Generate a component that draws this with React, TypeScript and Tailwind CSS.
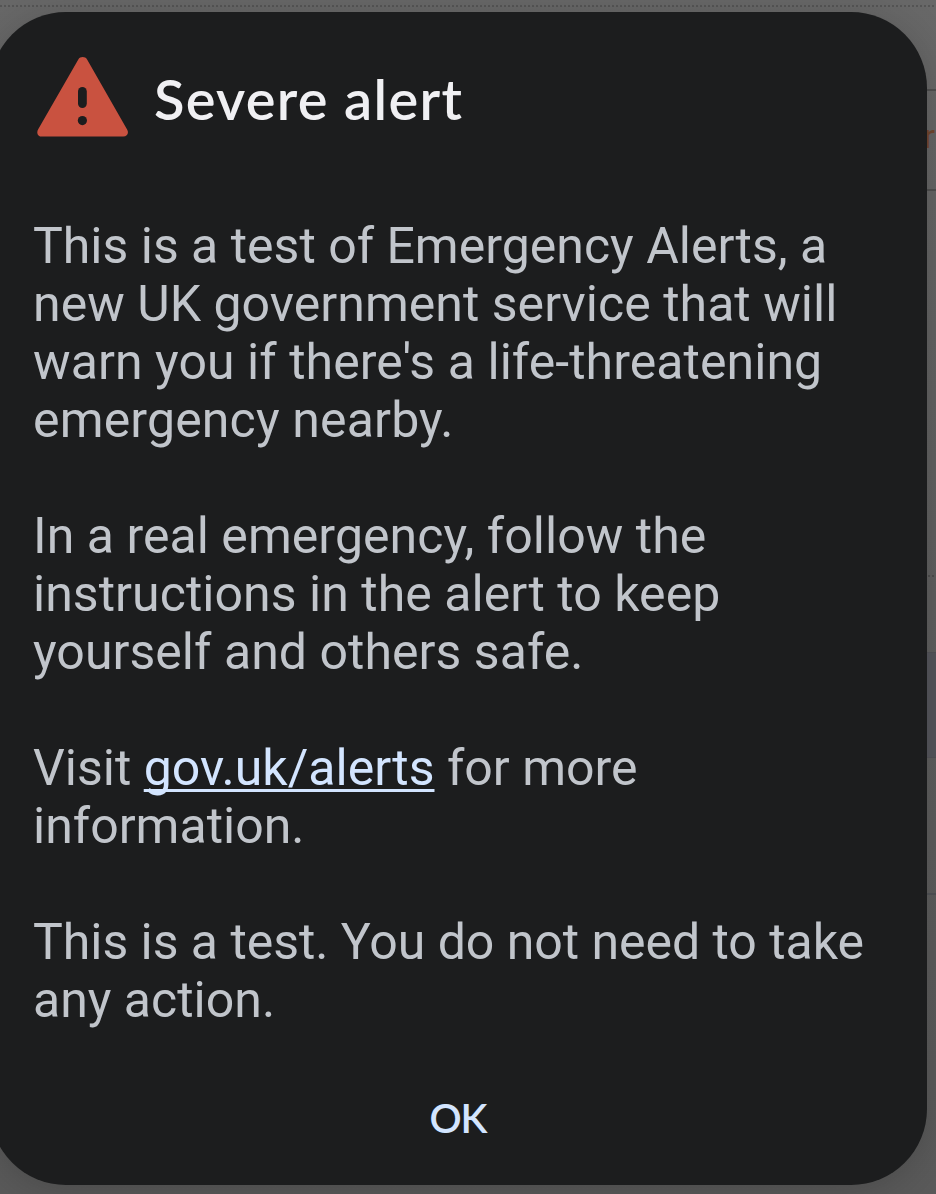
function WarningIcon() {
  return (
    <svg className="h-[80px] w-[92px] shrink-0" viewBox="0 0 92 80" aria-hidden="true">
      <path
        d="M41.3 2.4C43.2-.8 48.2-.8 50.1 2.4L90.1 72.5C92.2 76 90.2 79.6 86.3 79.6H5C.9 79.6-1 76 1.2 72.3Z"
        fill="#c95240"
      />
      <rect x="41" y="30" width="8.8" height="21" rx="4.4" fill="#1c1d1e" />
      <circle cx="45.4" cy="63.6" r="4.6" fill="#1c1d1e" />
    </svg>
  );
}

function DimmedPage() {
  return (
    <div className="absolute inset-0 flex flex-col overflow-hidden bg-linear-to-b from-[#686868] via-[#5f5f5f] to-[#5a5a5a]">
      <div className="h-[5px]" />
      <div className="h-[2px] bg-[repeating-linear-gradient(90deg,#555555_0px,#555555_2px,transparent_2px,transparent_4px)]" />
      <div className="h-[82px]" />
      <div className="h-[2px] bg-[#4f4f4f]" />
      <div className="flex h-[98px] justify-end pt-[20px] pr-[1px] font-['Roboto',sans-serif] text-[34px] leading-[50px] text-[#70462f]">
        <span>r</span>
      </div>
      <div className="h-[2px] bg-[#4f4f4f]" />
      <div className="h-[384px]" />
      <div className="h-[2px] bg-[repeating-linear-gradient(90deg,#4d4d4d_0px,#4d4d4d_2px,transparent_2px,transparent_4px)]" />
      <div className="h-[75px]" />
      <div className="h-[106px] border-y border-[#525257] bg-[#55565c]" />
      <div className="h-[135px]" />
      <div className="h-[2px] bg-[#505256]" />
    </div>
  );
}

export default function App() {
  return (
    <main className="relative h-[1194px] w-[936px] overflow-hidden bg-[#5c5c5c]">
      <DimmedPage />
      <section
        role="alertdialog"
        aria-labelledby="alert-title"
        className="relative mt-[12px] -ml-[10px] flex h-[1173px] w-[937px] flex-col rounded-[76px] bg-[#1c1d1e] pl-[43px] shadow-[0_6px_40px_rgba(0,0,0,0.18)]"
      >
        <header className="flex h-[160px] items-start gap-[25px] pt-[45px] pl-[4px]">
          <WarningIcon />
          <h1
            id="alert-title"
            className="-mt-[2px] font-['Lato',sans-serif] text-[56px] leading-[88px] font-semibold tracking-[1.3px] whitespace-nowrap text-[#f0f0f3]"
          >
            Severe alert
          </h1>
        </header>
        <div className="mt-[45px] flex flex-col gap-[58px] font-['Roboto',sans-serif] text-[50px] leading-[58px] whitespace-nowrap text-[#c1c5cb]">
          <p>
            This is a test of Emergency Alerts, a<br />
            <span className="tracking-[0.03px]">new UK government service that will</span><br />
            <span className="tracking-[0.06px]">warn you if there's a life-threatening</span><br />
            <span className="tracking-[0.15px]">emergency nearby.</span>
          </p>
          <p className="tracking-[0.04px]">
            In a real emergency, follow the<br />
            instructions in the alert to keep<br />
            yourself and others safe.
          </p>
          <p>
            Visit{" "}
            <a
              href="#"
              className="text-[#d3e5ff] underline decoration-[3px] underline-offset-[4px] [text-decoration-skip-ink:none]"
            >
              gov.uk/alerts
            </a>{" "}
            for more<br />
            information.
          </p>
          <p>
            <span className="tracking-[-0.03px]">This is a test. You do not need to take</span><br />
            any action.
          </p>
        </div>
        <button className="mt-[64px] ml-[385px] h-[50px] w-[80px] text-center font-['Lato',sans-serif] text-[40px] leading-[50px] font-semibold tracking-[-1px] text-[#d3e5ff]">
          OK
        </button>
      </section>
    </main>
  );
}
